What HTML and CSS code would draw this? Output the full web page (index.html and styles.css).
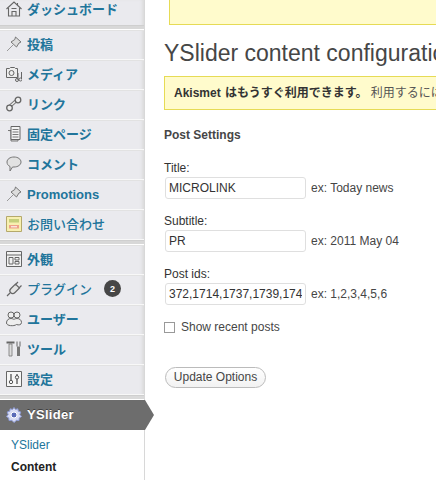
FILE: index.html
```html
<!DOCTYPE html>
<html lang="ja">
<head>
<meta charset="utf-8">
<title>YSlider content configuration</title>
<link rel="stylesheet" href="styles.css">
</head>
<body>
<div class="page">
  <nav class="sidebar">
    <a class="item first"><svg class="ico" viewBox="0 0 16 16"><path d="M.5 8 8 1 15.500 8M2.500 7v8h11V7M6 15v-4.500h4V15M11.500 2v3M5.500 7.500h5" fill="none" stroke="#666" stroke-width="1.100"/></svg><span class="strong">ダッシュボード</span></a>
    <div class="sep"></div>
    <a class="item"><svg class="ico" viewBox="0 0 16 16"><path d="M9.500 1 15 6 13 7 10.500 11 5 6 8.800 3.500Z" fill="#ddd" stroke="#777"/><path d="M7.500 8.500 1 15" stroke="#999" fill="none"/></svg><span class="strong">投稿</span></a>
    <a class="item"><svg class="ico" viewBox="0 0 16 16"><path d="M.5 2.500h3l1-1h4l1 1h2v9H.5z" fill="#eee" stroke="#666"/><circle cx="5.500" cy="7" r="2.500" fill="none" stroke="#666"/><path d="M12 7v7M15.500 6v7" stroke="#666" fill="none"/><circle cx="11" cy="14" r="1.500" fill="none" stroke="#666"/><circle cx="14.500" cy="13.500" r="1.500" fill="none" stroke="#666"/></svg><span class="strong">メディア</span></a>
    <a class="item"><svg class="ico" viewBox="0 0 16 16"><path d="M3 11 11 4" fill="none" stroke="#777" stroke-width="3.500"/><path d="M3 11 11 4" fill="none" stroke="#eee" stroke-width="1.500"/><circle cx="3.500" cy="12" r="2.800" fill="#eee" stroke="#666" stroke-width="1.300"/><circle cx="12" cy="4" r="2.800" fill="#eee" stroke="#666" stroke-width="1.300"/></svg><span class="strong">リンク</span></a>
    <a class="item"><svg class="ico" viewBox="0 0 16 16"><path d="M2 4.500h3V15h7v-1.500" fill="#ddd" stroke="#777"/><path d="M5 .5h9v13H5z" fill="#f4f4f4" stroke="#666"/><path d="M6.500 3.500h6M6.500 6h6M6.500 8.500h6M6.500 11h6" stroke="#777"/></svg><span class="strong">固定ページ</span></a>
    <a class="item"><svg class="ico" viewBox="0 0 16 16"><path d="M8 1c4 0 7 2.200 7 5s-3 5-7 5H6.500L4 15v-4.500C2 9.500 1 8 1 6 1 3.200 4 1 8 1Z" fill="#e2e2e2" stroke="#777"/></svg><span class="strong">コメント</span></a>
    <a class="item item-latin"><svg class="ico" viewBox="0 0 16 16"><path d="M9.500 1 15 6 13 7 10.500 11 5 6 8.800 3.500Z" fill="#ddd" stroke="#777"/><path d="M7.500 8.500 1 15" stroke="#999" fill="none"/></svg><span class="strong">Promotions</span></a>
    <a class="item"><svg class="ico" viewBox="0 0 16 16"><path d="M.5.500h15v15H.5z" fill="#f8f0b0" stroke="#b5a96b"/><path d="M3 3h10v3.500H3z" fill="#c5cf7c"/><path d="M3 9h10v3.500H3z" fill="#eea28a"/><path d="M5 10.800h6" stroke="#fff"/></svg><span>お問い合わせ</span></a>
    <div class="sep"></div>
    <a class="item"><svg class="ico" viewBox="0 0 16 16"><path d="M.5.500h15v15H.5z" fill="#f2f2f2" stroke="#666"/><path d="M.5 4h15M3 6.500h4v6.500H3zM9 6.500h4V9H9zM9 10.500h4V13H9z" fill="none" stroke="#666"/></svg><span class="strong">外観</span></a>
    <a class="item"><svg class="ico" viewBox="0 0 16 16"><path d="M5 7.500 9.500 3 13.500 7 9 11.500C7.500 13 5.500 12.500 4.500 11.500 3.500 10.500 3.500 9 5 7.500ZM9 4 12 1M12.500 7.500 15.500 4.500M4 12 1 15" fill="#e4e4e4" stroke="#666" stroke-width="1.200"/></svg><span>プラグイン</span><span class="badge">2</span></a>
    <a class="item"><svg class="ico" viewBox="0 0 16 16"><circle cx="5" cy="4" r="3" fill="#eee" stroke="#666"/><circle cx="11" cy="4" r="3" fill="#eee" stroke="#666"/><path d="M.5 12c0-3 2-4.500 4.500-4.500 1.500 0 3 1 3 1s1-1 3-1c2.500 0 4.500 1.500 4.500 4s-3 2.800-5 2C8 15.500.5 15 .5 12Z" fill="#eee" stroke="#666"/></svg><span class="strong">ユーザー</span></a>
    <a class="item"><svg class="ico" viewBox="0 0 16 16"><path d="M.5 1.500h8" stroke="#666" stroke-width="2" fill="none"/><path d="M3 3h3v12H3z" fill="#ddd" stroke="#777" stroke-width=".8"/><path d="M11 .5v5M14 .5v5" stroke="#666" fill="none"/><path d="M11 5.500h3V15h-3z" fill="#777"/></svg><span class="strong">ツール</span></a>
    <a class="item"><svg class="ico" viewBox="0 0 16 16"><path d="M.5.500h15v15H.5z" fill="#f6f6f6" stroke="#666"/><path d="M5 3v6M11 3v2M11 8v5" stroke="#555" fill="none" stroke-width="1.300"/><circle cx="5" cy="11" r="1.700" fill="none" stroke="#555"/><circle cx="11" cy="6.300" r="1.700" fill="none" stroke="#555"/></svg><span class="strong">設定</span></a>
    <div class="sep last"></div>
    <a class="item current"><svg class="ico" viewBox="0 0 16 16"><path d="M8 .5 9.500 2.500 11.800 1.800 12.300 4.200 14.800 5 13.800 7.500 15.500 9.500 13.200 11 13 13.500 10.500 13.300 8 15.500 5.800 13.300 3 13.500 2.800 11 .5 9.500 2.200 7.500 1.200 5 3.700 4.200 4.200 1.800 6.500 2.500Z" fill="#d8dcf4" stroke="#8d9bd8"/><circle cx="8" cy="8" r="3" fill="#5a6bb8" stroke="#fff"/></svg><span class="strong big">YSlider</span><i class="arrow"></i></a>
    <ul class="submenu">
      <li class="sub-link">YSlider</li>
      <li class="sub-active">Content</li>
    </ul>
  </nav>
  <main class="content">
    <div class="notice top"></div>
    <h2 class="title">YSlider content configuration</h2>
    <div class="notice akismet"><b>Akismet はもうすぐ利用できます。</b> 利用するにはAkismet APIキーを入力してください。</div>
    <h3 class="section">Post Settings</h3>
    <form class="form">
      <label class="field"><span>Title:</span><span class="line"><input class="text" value="MICROLINK"><span>ex: Today news</span></span></label>
      <label class="field"><span>Subtitle:</span><span class="line"><input class="text" value="PR"><span>ex: 2011 May 04</span></span></label>
      <label class="field"><span>Post ids:</span><span class="line"><input class="text" value="372,1714,1737,1739,174"><span>ex: 1,2,3,4,5,6</span></span></label>
      <label class="check"><input type="checkbox" class="box"><span>Show recent posts</span></label>
      <button type="button" class="button">Update Options</button>
    </form>
  </main>
</div>
</body>
</html>
```
FILE: styles.css
```css
* { box-sizing: border-box; }
html, body { margin: 0; height: 480px; overflow: hidden; background: #fff; }
body { font: 12px "Liberation Sans", "Noto Sans CJK JP", sans-serif; color: #333; }
.page { display: flex; width: 436px; height: 480px; overflow: hidden; }
.sidebar {
  flex: 0 0 145px; width: 145px; height: 480px; position: relative;
  background: #eaeaee; border-right: 1px solid #d8d8d8; box-shadow: inset -3px 0 3px -1px #dcdcdc;
}
.item {
  display: flex; align-items: center; height: 30px; padding: 0 0 3px 6px; gap: 5px;
  border-bottom: 1px solid #f8f8f8; border-top: 1px solid #e2e2e2;
  color: #21759b; font-size: 13px; font-weight: 500;
}
.item-latin { padding-bottom: 2px; }
.item span { white-space: nowrap; }
.item .strong { font-weight: 700; }
.item.first { height: 25px; padding-bottom: 8px; border-top: 0; border-bottom: 0; }
.ico { flex: 0 0 16px; width: 16px; height: 16px; }
.sep { height: 5px; background: #d8d8d8; border-top: 1px solid #cfcfcf; border-bottom: 1px solid #fff; }
.sep.last { background: #dadada; }
.badge {
  display: inline-flex; align-items: center; justify-content: center; width: 17px; height: 17px;
  margin-left: 7px; border-radius: 50%; background: #464646; color: #fff; font: bold 9px "Liberation Sans", sans-serif;
}
.current {
  position: relative; width: 145px; padding-bottom: 1px; border: 0; background: #6d6d6d; color: #fff;
  text-shadow: 0 -1px 0 #3f3f3f;
}
.item .big { letter-spacing: .3px; }
.arrow {
  position: absolute; left: 145px; top: 0; width: 9px; height: 30px;
  background: #6d6d6d; clip-path: polygon(0 0, 100% 50%, 0 100%);
}
.submenu { list-style: none; margin: 0; padding: 4px 0 0 11px; background: #fff; height: 50px; }
.submenu li { height: 22px; line-height: 22px; font-size: 12px; }
.sub-link { color: #21759b; }
.sub-active { color: #222; font-weight: 700; }
.content { flex: 0 0 auto; width: 640px; padding-left: 19px; }
.notice { background: #fffbcc; border: 1px solid #e6db55; }
.notice.top { height: 25px; margin-left: 5px; border-top: 0; }
.title { margin: 14px 0 0; height: 37px; font-size: 23px; line-height: 29px; font-weight: 400; color: #464646; white-space: nowrap; }
.akismet { height: 34px; line-height: 32px; padding-left: 9px; white-space: nowrap; color: #555; }
.akismet b { color: #333; word-spacing: 1px; }
.section { margin: 18px 0 0; font-size: 12px; line-height: 15px; font-weight: 700; color: #464646; }
.form { display: flex; flex-direction: column; align-items: flex-start; margin-top: 18px; }
.field { display: flex; flex-direction: column; margin-bottom: 15px; line-height: 14px; }
.line { display: flex; align-items: center; gap: 5px; margin-top: 2px; color: #464646; }
.text {
  width: 141px; height: 22px; margin-left: 1px; padding: 0 3px; background: #fff;
  border: 1px solid #dfdfdf; border-radius: 3px; font: 12px "Liberation Sans", sans-serif; color: #333; outline: 0;
}
.check { display: flex; align-items: center; gap: 6px; color: #464646; line-height: 14px; }
.box { appearance: none; width: 11px; height: 11px; margin: 0; background: #fff; border: 1px solid #999; border-radius: 0; }
.button {
  margin: 33px 0 0 1px; width: 101px; height: 21px; padding: 0 0 1px;
  background: linear-gradient(#fff, #f2f2f2); border: 1px solid #bbb; border-radius: 11px;
  font: 12px "Liberation Sans", sans-serif; color: #464646;
}
```
